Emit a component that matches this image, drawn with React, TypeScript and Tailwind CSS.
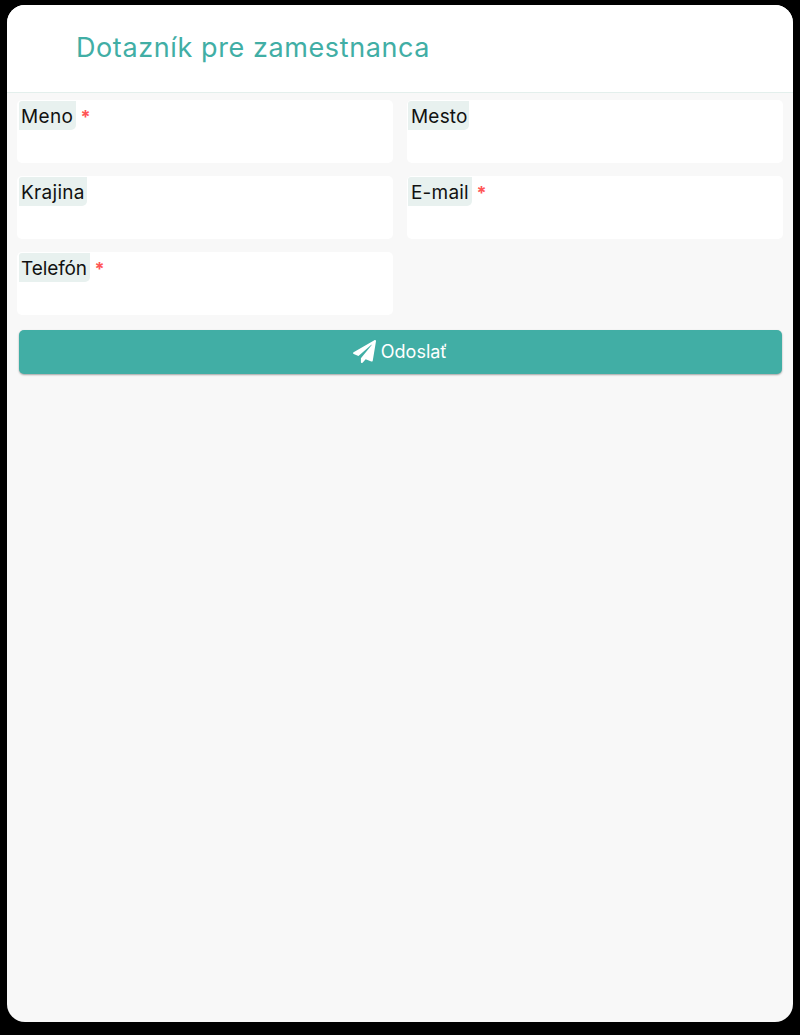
import React from "react";
import { FaPaperPlane } from "react-icons/fa";

function Field({
  label,
  required,
  w,
  right,
  tracking,
}: {
  label: string;
  required?: boolean;
  w: string;
  right?: boolean;
  tracking: string;
}) {
  return (
    <div className={`h-[63px] rounded-[5px] bg-white pt-px ${right ? "pl-px" : "pl-[2px]"}`}>
      <div className="flex items-start">
        <span
          className={`${w} ${tracking} ${right ? "pl-[3px]" : "pl-[2px]"} h-[29px] shrink-0 rounded-br-[5px] rounded-tl-[3px] bg-[#e8f1ef] text-[19px] leading-[31px] text-[#111]`}
        >
          {label}
        </span>
        {required && (
          <span className="ml-[4.5px] text-[18px] font-bold leading-[31px] text-[#ff5555]">*</span>
        )}
      </div>
    </div>
  );
}

export default function App() {
  return (
    <div className="h-[1035px] w-[800px] overflow-hidden bg-black px-[7px] pt-[5px] font-['Inter',sans-serif]">
      <div className="flex h-[1017px] flex-col overflow-hidden rounded-[18px] bg-[#f8f8f8]">
        <header className="h-[88px] shrink-0 border-b border-[#e3efec] bg-white pl-[69px] pt-[24px] text-[27px] leading-[38px] tracking-[0.6px] text-[#41aea5]">
          Dotazník pre zamestnanca
        </header>
        <form className="flex flex-col px-[10px] pt-[7px]">
          <div className="grid grid-cols-2 gap-x-[14px] gap-y-[13px]">
            <Field label="Meno" required w="w-[57px]" tracking="tracking-[0.35px]" />
            <Field label="Mesto" right w="w-[61px]" tracking="tracking-[0.2px]" />
            <Field label="Krajina" w="w-[68px]" tracking="tracking-[0.3px]" />
            <Field label="E-mail" right required w="w-[64px]" tracking="tracking-[0.2px]" />
            <Field label="Telefón" required w="w-[71px]" tracking="tracking-[-0.1px]" />
          </div>
          <button
            type="button"
            className="mx-[1.5px] mt-[14.5px] flex h-[44.5px] items-center justify-center gap-[5px] rounded-[5px] bg-[#41aea5] text-[18px] text-white shadow-[0_1px_2px_rgba(0,0,0,0.35)]"
          >
            <FaPaperPlane className="h-[23px] w-[23px]" />
            Odoslať
          </button>
        </form>
      </div>
    </div>
  );
}
